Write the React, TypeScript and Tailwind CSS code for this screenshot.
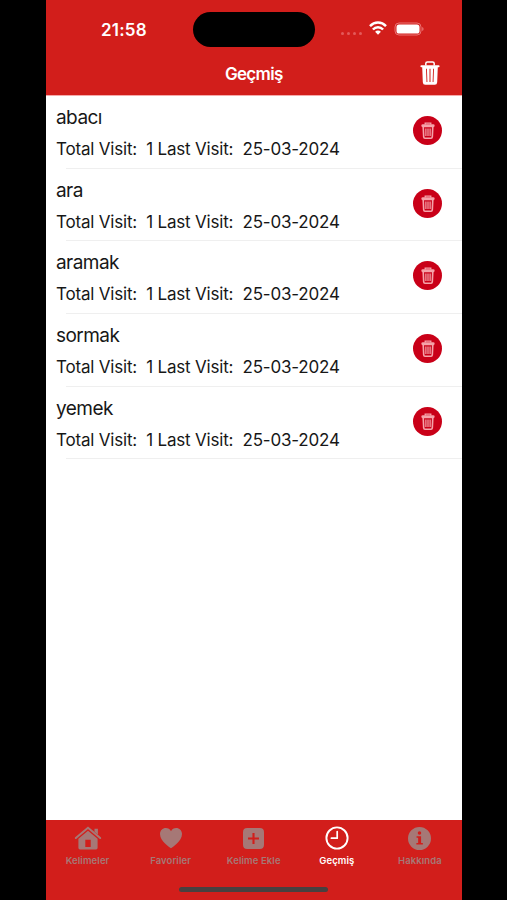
import React from "react";

interface HistoryItem {
  word: string;
  visits: number;
  lastVisit: string;
}

interface TabItem {
  label: string;
  icon: React.ReactNode;
  active?: boolean;
}

const history: HistoryItem[] = [
  { word: "abacı", visits: 1, lastVisit: "25-03-2024" },
  { word: "ara", visits: 1, lastVisit: "25-03-2024" },
  { word: "aramak", visits: 1, lastVisit: "25-03-2024" },
  { word: "sormak", visits: 1, lastVisit: "25-03-2024" },
  { word: "yemek", visits: 1, lastVisit: "25-03-2024" },
];

const TrashIcon: React.FC<{ className: string }> = ({ className }) => (
  <svg viewBox="0 0 20 24" className={className} fill="none">
    <path
      d="M5.8 4.6V2.6Q5.8 1 7.4 1h5.2q1.6 0 1.6 1.6v2"
      stroke="currentColor"
      strokeWidth="1.5"
    />
    <path
      fill="currentColor"
      fillRule="evenodd"
      d="M1.4 4.2h17.2q1 0 1 1t-1 1h-.8L17.2 21.2q-.1 2.6-2.5 2.6H5.3q-2.4 0-2.5-2.6L2.2 6.2h-.8q-1 0-1-1t1-1ZM6 7.8l.5 13.2h.9L6.9 7.8ZM9.5 7.8V21h1V7.8ZM13.1 7.8 12.6 21h.9L14 7.8Z"
    />
  </svg>
);

// outlined bin used inside the round row button
const SmallTrashIcon = () => (
  <svg viewBox="0 0 14 17" className="h-[17px] w-[14px]" fill="none" stroke="currentColor">
    <path d="M4.2 2.6V1.2h5.6v1.4" strokeWidth="1.3" />
    <path d="M1.8 3.8h10.4" strokeWidth="2.9" strokeLinecap="round" />
    <path d="M2.2 4.8 2.7 14.9q.1 1.3 1.3 1.3h6q1.2 0 1.3-1.3l.5-10.1" strokeWidth="1.6" />
    <path d="M4.9 6.5V14M7 6.5V14M9.1 6.5V14" strokeWidth="1.2" />
  </svg>
);

const HomeIcon = () => (
  <svg viewBox="0 0 28 24" className="h-6 w-7">
    <path
      d="M1.8 12 14 1.8 26.2 12"
      fill="none"
      stroke="currentColor"
      strokeWidth="2"
      strokeLinecap="round"
    />
    <path d="M20.5 2.7h3.4v6l-3.4-2.9Z" fill="currentColor" />
    <path
      fill="currentColor"
      fillRule="evenodd"
      d="M14 4.8 23.6 12.8v9q0 1.6-1.6 1.6H6q-1.6 0-1.6-1.6v-9ZM11.3 13.7v7.4h5.4v-7.4Z"
    />
  </svg>
);

const HeartIcon = () => (
  <svg viewBox="0 0 24 22" className="h-[22px] w-6" fill="currentColor">
    <path d="M12 21.2C10.8 20.6 1 14.5 1 7.1 1 3.5 3.6 1 6.8 1 9.1 1 11 2.2 12 4.2 13 2.2 14.9 1 17.2 1 20.4 1 23 3.5 23 7.1c0 7.4-9.8 13.5-11 14.1Z" />
  </svg>
);

const PlusIcon = () => (
  <svg viewBox="0 0 20 20" className="h-[21px] w-[21px]" fill="currentColor">
    <path
      fillRule="evenodd"
      d="M4 0h12q4 0 4 4v12q0 4-4 4H4q-4 0-4-4V4Q0 0 4 0ZM9 4.8V9H4.8v2H9v4.2h2V11h4.2V9H11V4.8Z"
    />
  </svg>
);

const ClockIcon = () => (
  <svg viewBox="0 0 24 24" className="h-6 w-6" fill="none" stroke="currentColor">
    <circle cx="12" cy="12" r="10.6" strokeWidth="1.9" />
    <path d="M12.2 5.6v6.6H6.4" strokeWidth="1.7" strokeLinecap="round" strokeLinejoin="round" />
  </svg>
);

const InfoIcon = () => (
  <svg viewBox="0 0 22 22" className="h-[23px] w-[23px]" fill="currentColor">
    <path
      fillRule="evenodd"
      d="M11 0a11 11 0 1 1 0 22 11 11 0 0 1 0-22ZM11 4a1.7 1.7 0 1 0 0 3.4A1.7 1.7 0 0 0 11 4ZM8.2 8.8v1.5h1.5v4.9H8v1.6h6.2v-1.6h-1.7V8.8Z"
    />
  </svg>
);

const tabs: TabItem[] = [
  { label: "Kelimeler", icon: <HomeIcon /> },
  { label: "Favoriler", icon: <HeartIcon /> },
  { label: "Kelime Ekle", icon: <PlusIcon /> },
  { label: "Geçmiş", icon: <ClockIcon />, active: true },
  { label: "Hakkında", icon: <InfoIcon /> },
];

const StatusBar = () => (
  <div className="flex h-[59px] pt-3 text-white">
    <div className="w-[147px] pt-1.5 pl-[55px] text-[17px] leading-6 font-semibold tracking-[0.2px]">21:58</div>
    <div className="h-[35px] w-[122px] rounded-full bg-black" />
    <div className="flex h-[35px] items-center pl-[26px]">
      <div className="flex gap-[3px] pt-[7px] text-[#e35a5a]">
        <span className="h-[3px] w-[3px] rounded-full bg-current" />
        <span className="h-[3px] w-[3px] rounded-full bg-current" />
        <span className="h-[3px] w-[3px] rounded-full bg-current" />
        <span className="h-[3px] w-[3px] rounded-full bg-current" />
      </div>
      <svg viewBox="0 0 18 14" className="mb-[3px] ml-[7px] h-3.5 w-[18px]" fill="none" stroke="currentColor">
        <path d="M1 5.1Q4.4 1.6 9 1.6t8 3.5" strokeWidth="2.5" />
        <path d="M3.9 8.5Q6 6.2 9 6.2t5.1 2.3" strokeWidth="2.4" />
        <path d="M9 13.8 6.1 10.8Q7.3 9.6 9 9.6t2.9 1.2Z" fill="currentColor" stroke="none" />
      </svg>
      <svg viewBox="0 0 30 14" className="mb-0.5 ml-[7px] h-3.5 w-[30px]" fill="none">
        <rect x="1" y="1" width="26" height="12" rx="4" stroke="#ea7272" />
        <rect x="2.5" y="2.4" width="23" height="9.2" rx="2.6" fill="white" />
        <path d="M28.2 5v4q1.4-.6 1.4-2t-1.4-2Z" fill="#ea7272" />
      </svg>
    </div>
  </div>
);

const HistoryRow: React.FC<{ item: HistoryItem }> = ({ item }) => (
  <li className="flex h-[72.65px] flex-col">
    <div className="flex grow justify-between pr-[19.5px] pl-2.5">
      <div className="pt-1.5 text-[#171717]">
        <p className="text-[19px] leading-[31px] tracking-[-0.55px]">{item.word}</p>
        <p className="text-[17px] leading-8 tracking-[-0.19px] whitespace-pre">
          {`Total Visit:  ${item.visits} Last Visit:  ${item.lastVisit}`}
        </p>
      </div>
      <button className="mt-5 flex h-[29px] w-[29px] items-center justify-center rounded-full bg-[#c90018] text-[#f5a3aa]">
        <SmallTrashIcon />
      </button>
    </div>
    <div className="ml-5 h-px shrink-0 bg-[#efefef]" />
  </li>
);

const App: React.FC = () => {
  return (
    <div className="flex h-[900px] w-[507px] bg-black pl-[46px] font-['Inter','Liberation_Sans',sans-serif]">
      <div className="flex w-[415.5px] flex-col bg-white">
        <header className="h-[95px] shrink-0 bg-[#d21e1b]">
          <StatusBar />
          <div className="grid h-[30px] grid-cols-3 items-center text-white">
            <span />
            <h1 className="text-center text-[17px] leading-[30px] font-semibold tracking-[-0.7px]">Geçmiş</h1>
            <button className="mr-[21.5px] mb-0.5 justify-self-end">
              <TrashIcon className="h-6 w-5" />
            </button>
          </div>
        </header>

        <ul className="grow border-t border-[#f6aaaa]">
          {history.map((item) => (
            <HistoryRow key={item.word} item={item} />
          ))}
        </ul>

        <nav className="flex h-20 shrink-0 flex-col bg-[#d21e1b]">
          <div className="grid grow grid-cols-5">
            {tabs.map((tab) => (
              <div
                key={tab.label}
                className={`flex flex-col items-center pt-1.5 ${tab.active ? "text-white" : "text-[#a67876]"}`}
              >
                <div className="flex h-6 items-center">{tab.icon}</div>
                <span className="mt-1 text-[9.5px] leading-[14px] font-semibold tracking-[0.1px]">{tab.label}</span>
              </div>
            ))}
          </div>
          <div className="mb-2 h-[5px] w-[149px] self-center rounded-full bg-[#484040]" />
        </nav>
      </div>
    </div>
  );
};

export default App;
